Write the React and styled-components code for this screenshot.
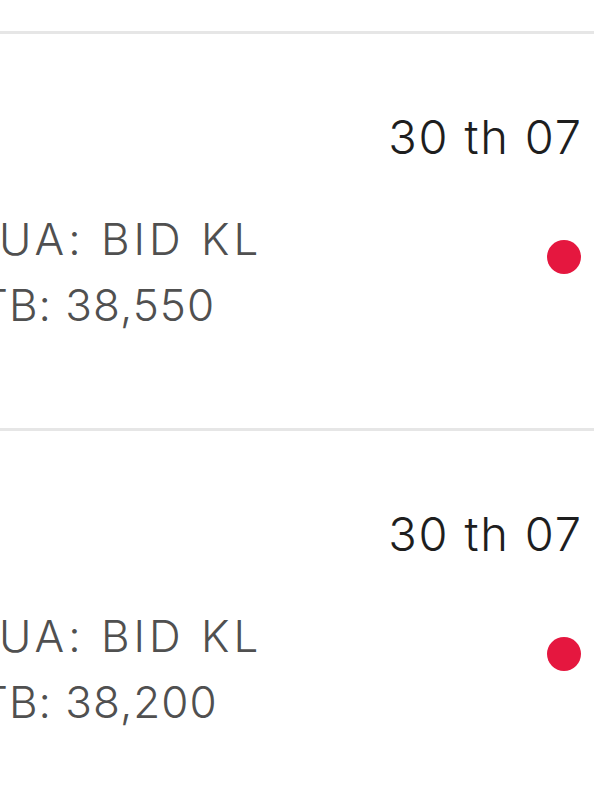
import React from "react";
import styled, { createGlobalStyle } from "styled-components";

const Global = createGlobalStyle`
  html, body { margin: 0; padding: 0; background: #ffffff; }
  body { overflow: hidden; font-family: Inter, "Liberation Sans", sans-serif; }
`;

const Screen = styled.div`
  width: 600px;
  height: 800px;
  overflow: hidden;
  background: #fff;
  padding-top: 31px;
  box-sizing: border-box;
`;

const Divider = styled.div`
  height: 3px;
  background: #e6e6e6;
  margin-right: 6px;
`;

const Row = styled.div`
  height: 394px;
  display: grid;
  grid-template-columns: 1fr auto;
  overflow: hidden;
`;

const Info = styled.div`
  padding-top: 172px;
  display: flex;
  flex-direction: column;
  overflow: hidden;
`;

const InfoLine = styled.div`
  font-size: 44px;
  font-weight: 300;
  line-height: 66px;
  color: #505050;
  white-space: nowrap;
  letter-spacing: ${(p) => p.$spacing}px;
  margin-left: ${(p) => p.$shift}px;
`;

const Side = styled.div`
  padding-top: 73px;
  padding-right: 17px;
  display: flex;
  flex-direction: column;
  align-items: flex-end;
`;

const DateText = styled.div`
  font-size: 47px;
  font-weight: 300;
  line-height: 60px;
  letter-spacing: 1.85px;
  color: #1e1e1e;
  white-space: nowrap;
`;

const Dot = styled.span`
  margin-top: 73px;
  margin-right: 2px;
  width: 34px;
  height: 34px;
  border-radius: 50%;
  background: #e5173f;
`;

const items = [
  { date: "30 th 07", kl: "UA: BID KL", price: "TB: 38,550" },
  { date: "30 th 07", kl: "UA: BID KL", price: "TB: 38,200" },
];

export default function App() {
  return (
    <>
      <Global />
      <Screen>
        {items.map((it, i) => (
          <React.Fragment key={i}>
            <Divider />
            <Row>
              <Info>
                <InfoLine $shift={-1} $spacing={4}>{it.kl}</InfoLine>
                <InfoLine $shift={-20} $spacing={1}>{it.price}</InfoLine>
              </Info>
              <Side>
                <DateText>{it.date}</DateText>
                <Dot />
              </Side>
            </Row>
          </React.Fragment>
        ))}
      </Screen>
    </>
  );
}
